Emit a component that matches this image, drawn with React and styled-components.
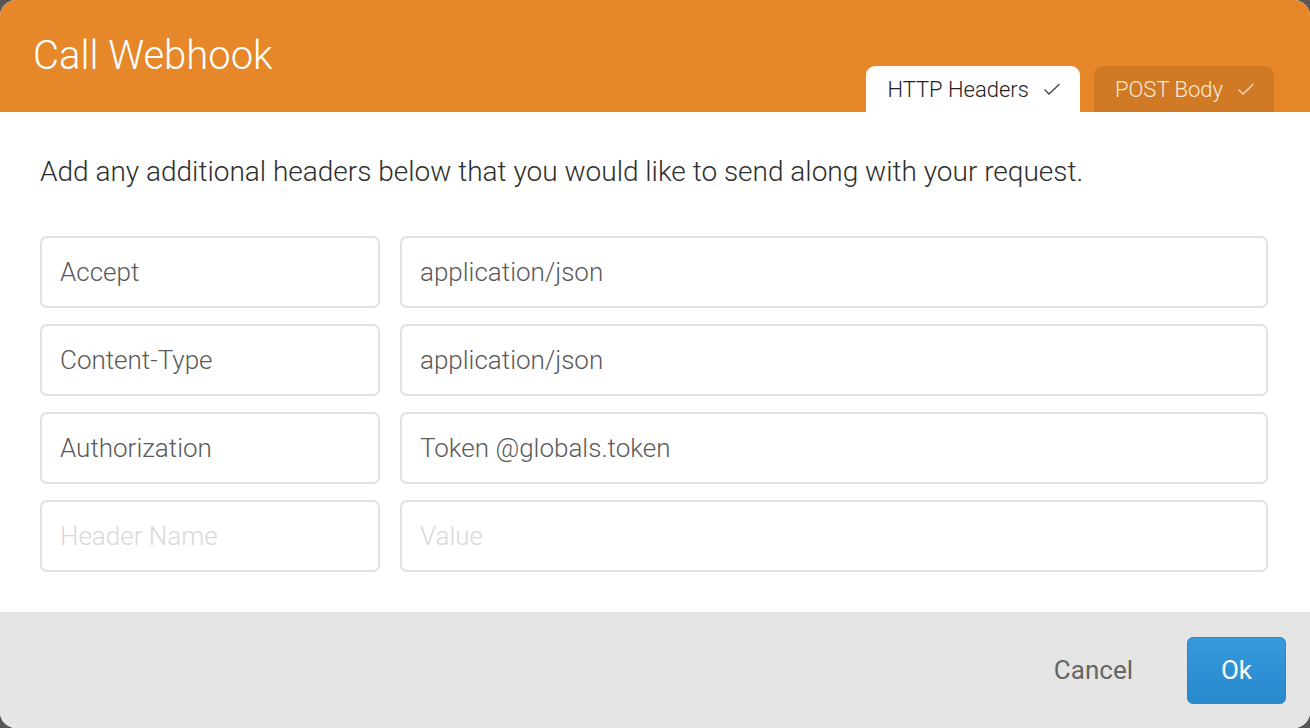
import React from 'react'
import styled, { createGlobalStyle } from 'styled-components'

const GlobalStyle = createGlobalStyle`
  html, body {
    margin: 0;
    padding: 0;
    background: #565656;
    font-family: Roboto, "Liberation Sans", sans-serif;
  }
`

const Dialog = styled.div`
  width: 1310px;
  height: 728px;
  border-radius: 16px;
  overflow: hidden;
  background: #fff;
  display: flex;
  flex-direction: column;
`

const Header = styled.header`
  height: 112px;
  flex: none;
  background: #e6872a;
  display: flex;
  align-items: flex-end;
  justify-content: space-between;
  padding: 0 36px 0 33px;
  box-sizing: border-box;
`

const Title = styled.h1`
  align-self: flex-start;
  margin: 31px 0 0;
  font-size: 40px;
  line-height: 50px;
  font-weight: 300;
  color: #fff;
`

const Tabs = styled.nav`
  display: flex;
  gap: 14px;
`

const Tab = styled.div`
  height: 46px;
  box-sizing: border-box;
  display: flex;
  align-items: center;
  gap: 14px;
  padding: 0 19px 0 21px;
  border-radius: 9px 9px 0 0;
  font-size: 22px;
  font-weight: 300;
  background: ${p => (p.$active ? '#fff' : '#d07a25')};
  color: ${p => (p.$active ? '#222' : '#fbe9d8')};
`

const Check = ({ color }) => (
  <svg width="18" height="14" viewBox="0 0 18 14">
    <polyline points="1.5,7.5 6,12 16.5,2" fill="none" stroke={color} strokeWidth="1.3" />
  </svg>
)

const Body = styled.main`
  flex: 1;
  padding: 43px 42px 40px 40px;
`

const Intro = styled.p`
  margin: 0 0 47px;
  font-size: 28px;
  line-height: 34px;
  font-weight: 300;
  color: #2e2e2e;
`

const Grid = styled.div`
  display: grid;
  grid-template-columns: 340px 1fr;
  column-gap: 20px;
  row-gap: 16px;
`

const Field = styled.div`
  height: 72px;
  box-sizing: border-box;
  border: 2px solid #e1e1e1;
  border-radius: 7px;
  display: flex;
  align-items: center;
  padding: 0 18px;
  font-size: 26px;
  font-weight: 300;
  color: ${p => (p.$placeholder ? '#d9d9d9' : '#5a5a5a')};
`

const Footer = styled.footer`
  height: 116px;
  flex: none;
  background: #e5e5e5;
  display: flex;
  align-items: center;
  justify-content: flex-end;
  padding-right: 24px;
  gap: 30px;
`

const CancelButton = styled.button`
  border: none;
  background: none;
  font-family: inherit;
  font-size: 26px;
  color: #666;
  padding: 0 24px;
`

const OkButton = styled.button`
  width: 99px;
  height: 67px;
  border: 1px solid #2a87c9;
  border-radius: 6px;
  background: linear-gradient(#3599dc, #2889cd);
  color: #fff;
  font-family: inherit;
  font-size: 26px;
`

const headers = [
  ['Accept', 'application/json'],
  ['Content-Type', 'application/json'],
  ['Authorization', 'Token @globals.token'],
]

export default function App() {
  return (
    <>
      <GlobalStyle />
      <Dialog>
        <Header>
          <Title>Call Webhook</Title>
          <Tabs>
            <Tab $active>
              HTTP Headers <Check color="#444" />
            </Tab>
            <Tab>
              POST Body <Check color="#f6dcc2" />
            </Tab>
          </Tabs>
        </Header>
        <Body>
          <Intro>Add any additional headers below that you would like to send along with your request.</Intro>
          <Grid>
            {headers.map(([name, value]) => (
              <React.Fragment key={name}>
                <Field>{name}</Field>
                <Field>{value}</Field>
              </React.Fragment>
            ))}
            <Field $placeholder>Header Name</Field>
            <Field $placeholder>Value</Field>
          </Grid>
        </Body>
        <Footer>
          <CancelButton>Cancel</CancelButton>
          <OkButton>Ok</OkButton>
        </Footer>
      </Dialog>
    </>
  )
}
